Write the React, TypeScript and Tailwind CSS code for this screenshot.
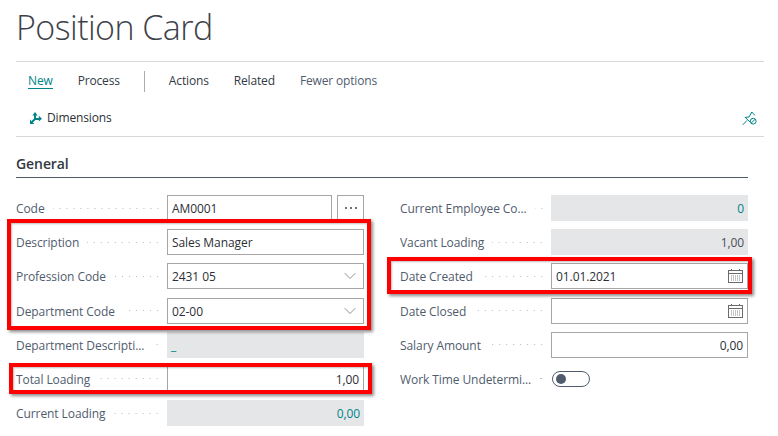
import { ChevronDown } from "lucide-react";
import type { ReactNode } from "react";

function DimensionsIcon() {
  return (
    <svg className="shrink-0" width="12" height="12" viewBox="0 0 12 12" fill="none" stroke="#008489" strokeWidth="1.9">
      <path d="M5 7V2.5M5 7H9.5M5 7L2 10" />
      <path d="M2.4 3.4L5 0L7.6 3.4Z" fill="#008489" stroke="none" />
      <path d="M8.8 3.8L12 6.8L8.8 9.6Z" fill="#008489" stroke="none" />
      <path d="M0 7.6V12H4.4Z" fill="#008489" stroke="none" />
    </svg>
  );
}

function PinIcon() {
  return (
    <svg width="15" height="15" viewBox="0 0 15 15" fill="none" stroke="#008489" strokeWidth="1">
      <path d="M.8 13.8L5 9.4" />
      <path d="M2.8 6.4L7 6L9.8 1L13 4.4" />
      <path d="M3.2 6.4L8 11" />
      <circle cx="11.2" cy="10.2" r="2.9" />
      <path d="M9.2 12.2L13.2 8.2" />
    </svg>
  );
}

function CalendarIcon() {
  return (
    <svg width="15" height="14" viewBox="0 0 15 14" fill="none" stroke="#6b6b6b" strokeWidth="1">
      <rect x="0.5" y="1.5" width="14" height="12" />
      <path d="M.5 4.5H14.5M3.5 0V2M11.5 0V2" />
      <path d="M3 7H12M3 9H12M3 11H12" strokeDasharray="1 1" stroke="#8a8a8a" />
    </svg>
  );
}

function Label({ text }: { text: string }) {
  return (
    <div className="flex w-[151px] shrink-0 items-center pr-[6px]">
      <span className="translate-y-px whitespace-nowrap text-[#505c6d]">{text}</span>
      <div className="ml-[8px] h-[3px] min-w-0 flex-1 bg-[radial-gradient(circle,#b4b8bd_0.8px,transparent_1px)] bg-[length:7px_3px] bg-right bg-repeat-x" />
    </div>
  );
}

function Field({ label, children }: { label: string; children: ReactNode }) {
  return (
    <div className="flex h-[26px]">
      <Label text={label} />
      {children}
    </div>
  );
}

function Input({ value, right, icon }: { value?: string; right?: boolean; icon?: ReactNode }) {
  return (
    <div className={`flex min-w-0 flex-1 items-center border border-[#a6a6a6] pl-[4px] pr-[4px] text-[#2b2f36] ${right ? "justify-end" : "justify-between"}`}>
      {value && <span className="translate-y-px">{value}</span>}
      {!value && <span />}
      {icon}
    </div>
  );
}

function ReadOnly({ value, teal, right }: { value: string; teal?: boolean; right?: boolean }) {
  return (
    <div className={`flex flex-1 items-center bg-[#e5e6e8] px-[4px] ${right ? "justify-end" : ""} ${teal ? "text-[#008489]" : "text-[#4a4f57]"}`}>
      <span className="translate-y-px">{value}</span>
    </div>
  );
}

function Chevron() {
  return <ChevronDown size={20} strokeWidth={0.9} className="mr-[-1px] text-[#6b6b6b]" />;
}

function RedBox({ className }: { className: string }) {
  return <div className={`pointer-events-none absolute border-[4px] border-[#ff0000] shadow-[2px_2px_3px_rgba(0,0,0,0.45),inset_1px_1px_2px_rgba(0,0,0,0.25)] ${className}`} />;
}

function CommandBar() {
  return (
    <div className="mt-[14px] w-[748px] border-y border-[#d8d8d8] tracking-[-0.15px]">
      <div className="flex h-[38px] items-center pl-[12px] text-[#323a45]">
        <span className="mr-[25px] border-b border-[#008489] leading-[15px] text-[#008489]">New</span>
        <span>Process</span>
        <div className="mx-[24px] h-[21px] w-px bg-[#a8adb3]" />
        <span className="mr-[25px]">Actions</span>
        <span className="mr-[25px]">Related</span>
        <span className="text-[#505c6d]">Fewer options</span>
      </div>
      <div className="flex h-[36px] items-center justify-between pl-[14px] pr-[7px] text-[#2b2f36]">
        <div className="flex items-center gap-[5px]">
          <DimensionsIcon />
          <span>Dimensions</span>
        </div>
        <PinIcon />
      </div>
    </div>
  );
}

export default function App() {
  return (
    <div className="relative h-[436px] w-[778px] overflow-hidden bg-white pl-[16px] font-['Open_Sans',sans-serif] text-[12px] tracking-[-0.08px]">
      <h1 className="mt-[7px] h-[40px] whitespace-nowrap text-[34px] leading-[40px] font-light tracking-[-0.55px] text-[#3d424a]">Position Card</h1>
      <CommandBar />
      <div className="w-[732px]">
        <div className="mt-[16px] border-b border-[#505a6b] pb-[3px] text-[14px] leading-[21px] font-semibold text-[#333942]">General</div>
        <div className="mt-[17px] grid grid-cols-[348px_348px] gap-x-[36px]">
          <div className="flex flex-col gap-y-[8.2px]">
            <Field label="Code">
              <div className="flex flex-1 gap-[5px]">
                <Input value="AM0001" />
                <div className="flex w-[27px] items-center justify-center gap-[3px] border border-[#a6a6a6]">
                  <span className="size-[2px] rounded-full bg-[#444]" />
                  <span className="size-[2px] rounded-full bg-[#444]" />
                  <span className="size-[2px] rounded-full bg-[#444]" />
                </div>
              </div>
            </Field>
            <Field label="Description"><Input value="Sales Manager" /></Field>
            <Field label="Profession Code"><Input value="2431 05" icon={<Chevron />} /></Field>
            <Field label="Department Code"><Input value="02-00" icon={<Chevron />} /></Field>
            <Field label="Department Descripti..."><ReadOnly value="_" teal /></Field>
            <Field label="Total Loading"><Input value="1,00" right /></Field>
            <Field label="Current Loading"><ReadOnly value="0,00" teal right /></Field>
          </div>
          <div className="flex flex-col gap-y-[8.2px]">
            <Field label="Current Employee Co..."><ReadOnly value="0" teal right /></Field>
            <Field label="Vacant Loading"><ReadOnly value="1,00" right /></Field>
            <Field label="Date Created"><Input value="01.01.2021" icon={<CalendarIcon />} /></Field>
            <Field label="Date Closed"><Input icon={<CalendarIcon />} /></Field>
            <Field label="Salary Amount"><Input value="0,00" right /></Field>
            <Field label="Work Time Undetermi...">
              <div className="flex flex-1 items-center">
                <div className="ml-[1px] flex h-[16px] w-[38px] items-center rounded-full border border-[#505c6d] pl-[3px]">
                  <div className="size-[10px] rounded-full bg-[#505c6d]" />
                </div>
              </div>
            </Field>
          </div>
        </div>
      </div>
      <RedBox className="left-[7px] top-[219px] h-[111px] w-[364px]" />
      <RedBox className="left-[9px] top-[363px] h-[31px] w-[363px]" />
      <RedBox className="left-[387px] top-[257px] h-[37px] w-[365px]" />
    </div>
  );
}
